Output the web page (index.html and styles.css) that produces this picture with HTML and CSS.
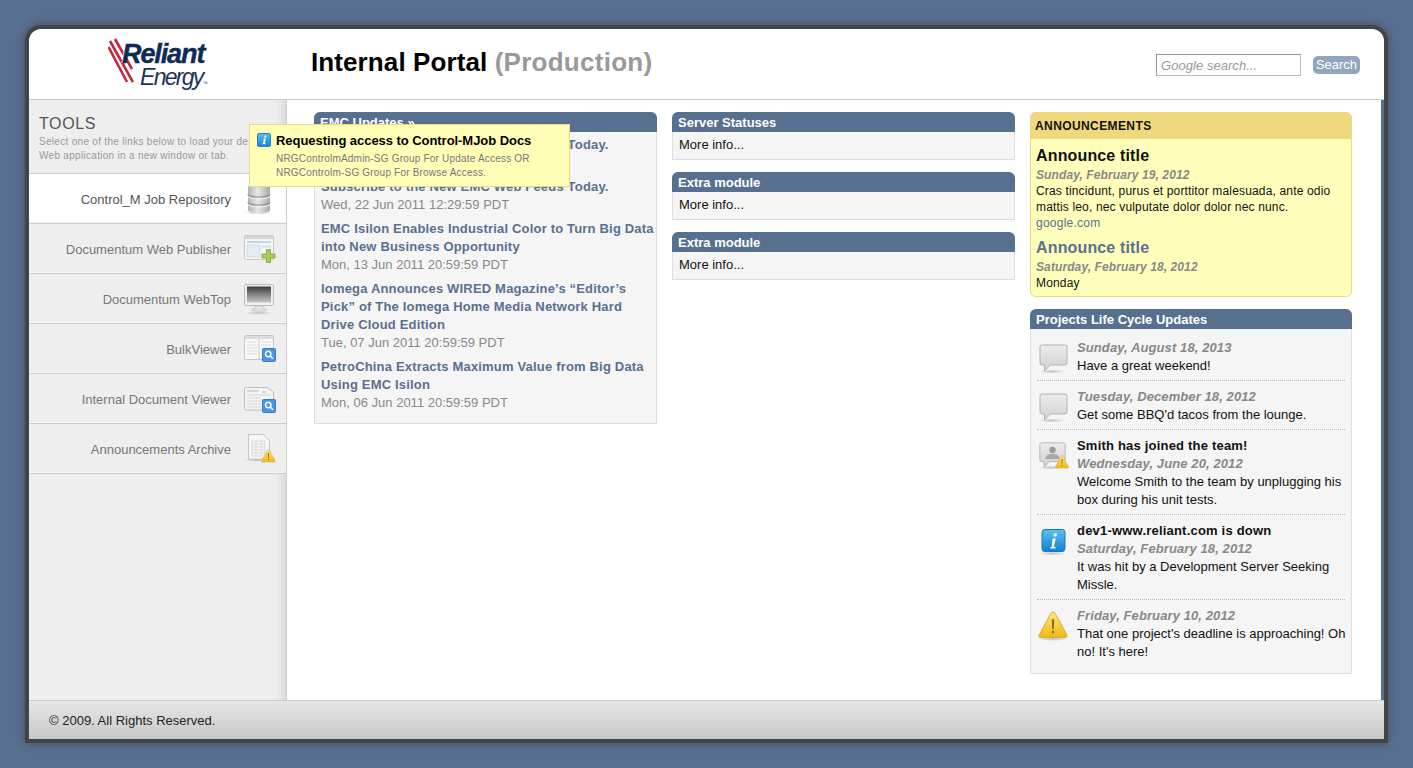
FILE: index.html
```html
<!DOCTYPE html>
<html lang="en">
<head>
<meta charset="utf-8">
<title>Internal Portal (Production)</title>
<link rel="stylesheet" href="styles.css">
</head>
<body>
<svg class="defs" aria-hidden="true">
  <defs>
    <linearGradient id="gSilver" x1="0" y1="0" x2="1" y2="0"><stop offset="0" stop-color="#b4b4b4"/><stop offset=".45" stop-color="#e8e8e8"/><stop offset="1" stop-color="#a8a8a8"/></linearGradient>
    <linearGradient id="gScreen" x1="0" y1="0" x2="0" y2="1"><stop offset="0" stop-color="#3c3c3c"/><stop offset=".55" stop-color="#8a8a8a"/><stop offset="1" stop-color="#c4c4c4"/></linearGradient>
    <linearGradient id="gBubble" x1="0" y1="0" x2="0" y2="1"><stop offset="0" stop-color="#ececec"/><stop offset="1" stop-color="#d0d0d0"/></linearGradient>
    <linearGradient id="gInfo" x1="0" y1="0" x2="0" y2="1"><stop offset="0" stop-color="#5cc0f0"/><stop offset="1" stop-color="#1480d0"/></linearGradient>
    <linearGradient id="gWarn" x1="0" y1="0" x2="0" y2="1"><stop offset="0" stop-color="#ffe680"/><stop offset="1" stop-color="#f0b818"/></linearGradient>
    <radialGradient id="gShade"><stop offset="0" stop-color="#999" stop-opacity=".6"/><stop offset="1" stop-color="#999" stop-opacity="0"/></radialGradient>
    <symbol id="i-warn" viewBox="0 0 32 30">
      <path d="M16 1.500c1 0 1.700.6 2.200 1.500l12 22c.8 1.600 0 3-1.800 3H3.600c-1.800 0-2.600-1.400-1.800-3l12-22c.5-.9 1.200-1.500 2.200-1.500z" fill="url(#gWarn)" stroke="#d8a828"/>
      <path d="M14.800 9h2.400l-.4 10h-1.600zM14.900 21h2.200v2.400h-2.200z" fill="#8a6a10"/>
    </symbol>
    <symbol id="i-mag" viewBox="0 0 14 14">
      <rect x=".5" y=".5" width="13" height="13" rx="1" fill="#4a96e6" stroke="#3a7cc8"/>
      <circle cx="6.200" cy="6" r="2.700" fill="none" stroke="#fff" stroke-width="1.400"/>
      <path d="M8.200 8l2.800 2.800" stroke="#fff" stroke-width="1.600"/>
    </symbol>
    <symbol id="i-bubble" viewBox="0 0 32 32">
      <ellipse cx="14" cy="29.500" rx="13" ry="2" fill="url(#gShade)"/>
      <path d="M4.500 3h23a2 2 0 0 1 2 2v16a2 2 0 0 1-2 2H13l-6 6v-6H4.500a2 2 0 0 1-2-2V5a2 2 0 0 1 2-2z" fill="url(#gBubble)" stroke="#b4b4b4"/>
    </symbol>
  </defs>
</svg>

<div class="frame">
  <header class="top">
    <a class="logo" href="#">
      <svg class="logo-mark" viewBox="0 0 26 46" aria-hidden="true">
        <path d="M2 3l23 41M7 1l17 30M.5 9l18.500 35" fill="none" stroke="#c4283c" stroke-width="2.600"/>
      </svg>
      <span class="logo-text"><b class="logo-a">Reliant</b><i class="logo-b">Energy<sup class="logo-tm">™</sup></i></span>
    </a>
    <h1 class="title">Internal Portal <span class="title-env">(Production)</span></h1>
    <form class="search">
      <input class="search-input" type="text" placeholder="Google search...">
      <button class="search-btn" type="button">Search</button>
    </form>
  </header>

  <div class="main">
    <aside class="side">
      <div class="side-head">
        <h2 class="side-title">TOOLS</h2>
        <p class="side-desc">Select one of the links below to load your desired<br>Web application in a new window or tab.</p>
      </div>
      <nav>
        <a class="nav-item is-active" href="#"><span>Control_M Job Repository</span>
          <svg class="nav-icon" viewBox="0 0 32 32" aria-hidden="true">
            <g transform="translate(-1 0)">
            <ellipse cx="16" cy="29.500" rx="15" ry="2" fill="url(#gShade)"/>
            <path d="M5 4c0-4 22-4 22 0v23c0 4-22 4-22 0z" fill="url(#gSilver)"/>
            <path d="M5 11c0 4 22 4 22 0M5 19c0 4 22 4 22 0" fill="none" stroke="#8e8e8e" stroke-width="1.200"/>
            <path d="M5 13c0 4 22 4 22 0M5 21c0 4 22 4 22 0" fill="none" stroke="#f4f4f4"/>
            </g>
          </svg>
        </a>
        <a class="nav-item" href="#"><span>Documentum Web Publisher</span>
          <svg class="nav-icon" viewBox="0 0 32 32" aria-hidden="true">
            <rect x=".5" y="2.500" width="29" height="24" rx="1.500" fill="#f6f6f6" stroke="#c8c8c8"/>
            <rect x="1" y="3" width="28" height="3" fill="#d8d8d8"/>
            <rect x="3" y="8" width="24" height="2" fill="#c4d6e6"/>
            <rect x="3" y="12" width="13" height="12" fill="#e2ecf4" stroke="#c4d0dc" stroke-width=".6"/>
            <rect x="18" y="12" width="9" height="3" fill="#dde6ee"/>
            <path d="M22.500 16.500h4v4.500h4.500v4h-4.500v4.500h-4v-4.500h-4.500v-4h4.500z" fill="#a8cc58" stroke="#8ab040"/>
          </svg>
        </a>
        <a class="nav-item" href="#"><span>Documentum WebTop</span>
          <svg class="nav-icon" viewBox="0 0 32 32" aria-hidden="true">
            <ellipse cx="15" cy="30" rx="14" ry="1.800" fill="url(#gShade)"/>
            <rect x=".5" y="1.500" width="29" height="21" rx="1.500" fill="#f0f0f0" stroke="#bdbdbd"/>
            <rect x="3" y="3.500" width="24" height="16" fill="url(#gScreen)"/>
            <path d="M11 23h8v3h3v2H8v-2h3z" fill="#e6e6e6" stroke="#bbb" stroke-width=".7"/>
          </svg>
        </a>
        <a class="nav-item" href="#"><span>BulkViewer</span>
          <svg class="nav-icon" viewBox="0 0 32 32" aria-hidden="true">
            <rect x=".5" y="2.500" width="29" height="24" rx="1.500" fill="#f8f8f8" stroke="#c4c4c4"/>
            <rect x="1" y="3" width="28" height="3" fill="#dcdcdc"/>
            <path d="M15 6v20" stroke="#ccc"/>
            <path d="M3 9h10M3 12h10M3 15h10M3 18h10M3 21h10M17 9h10M17 12h10" stroke="#dcdcdc"/>
            <use href="#i-mag" x="18" y="15" width="14" height="14"/>
          </svg>
        </a>
        <a class="nav-item" href="#"><span>Internal Document Viewer</span>
          <svg class="nav-icon" viewBox="0 0 32 32" aria-hidden="true">
            <path d="M2 4.500h21l6.500 5v16a1.500 1.500 0 0 1-1.500 1.500H2a1.500 1.500 0 0 1-1.500-1.500v-20a1.500 1.500 0 0 1 1.500-1z" fill="#f4f4f4" stroke="#bdbdbd"/>
            <path d="M3 8h12M18 9h4" stroke="#b8b8b8" stroke-width="1.200"/>
            <path d="M3 12h24M3 15h14M3 18h14M3 21h14M3 24h14" stroke="#d4d4d4"/>
            <use href="#i-mag" x="18" y="16" width="14" height="14"/>
          </svg>
        </a>
        <a class="nav-item" href="#"><span>Announcements Archive</span>
          <svg class="nav-icon" viewBox="0 0 32 32" aria-hidden="true">
            <ellipse cx="13" cy="27" rx="13" ry="1.800" fill="url(#gShade)"/>
            <path d="M4.500 1.500h15l6 6v18.500h-21z" fill="#f6f6f6" stroke="#c4c4c4"/>
            <path d="M8 8h13v15H8zM8 11h13M8 14h13M8 17h13M8 20h13M12 8v15M17 8v15" fill="none" stroke="#d6d6d6" stroke-width=".8"/>
            <use href="#i-warn" x="17" y="16" width="15" height="14"/>
          </svg>
        </a>
      </nav>
    </aside>

    <div class="content">
      <section class="panel">
        <h3 class="panel-head">EMC Updates »</h3>
        <div class="panel-body feed">
          <article class="feed-item"><a class="feed-title" href="#">Subscribe to the New EMC Web Feeds Today.</a><div class="feed-date">Wed, 22 Jun 2011 12:29:59 PDT</div></article>
          <article class="feed-item"><a class="feed-title" href="#">Subscribe to the New EMC Web Feeds Today.</a><div class="feed-date">Wed, 22 Jun 2011 12:29:59 PDT</div></article>
          <article class="feed-item"><a class="feed-title" href="#">EMC Isilon Enables Industrial Color to Turn Big Data into New Business Opportunity</a><div class="feed-date">Mon, 13 Jun 2011 20:59:59 PDT</div></article>
          <article class="feed-item"><a class="feed-title" href="#">Iomega Announces WIRED Magazine’s “Editor’s Pick” of The Iomega Home Media Network Hard Drive Cloud Edition</a><div class="feed-date">Tue, 07 Jun 2011 20:59:59 PDT</div></article>
          <article class="feed-item"><a class="feed-title" href="#">PetroChina Extracts Maximum Value from Big Data Using EMC Isilon</a><div class="feed-date">Mon, 06 Jun 2011 20:59:59 PDT</div></article>
        </div>
      </section>

      <div class="col">
        <section class="panel"><h3 class="panel-head">Server Statuses</h3><div class="panel-body mod"><a class="more" href="#">More info...</a></div></section>
        <section class="panel"><h3 class="panel-head">Extra module</h3><div class="panel-body mod"><a class="more" href="#">More info...</a></div></section>
        <section class="panel"><h3 class="panel-head">Extra module</h3><div class="panel-body mod"><a class="more" href="#">More info...</a></div></section>
      </div>

      <div class="col col-right">
        <section class="notice">
          <h3 class="notice-head">ANNOUNCEMENTS</h3>
          <div class="notice-body">
            <h4 class="ann-title">Announce title</h4>
            <div class="date">Sunday, February 19, 2012</div>
            <p class="txt">Cras tincidunt, purus et porttitor malesuada, ante odio mattis leo, nec vulputate dolor dolor nec nunc.</p>
            <a class="ann-link" href="#">google.com</a>
            <h4 class="ann-title is-link">Announce title</h4>
            <div class="date">Saturday, February 18, 2012</div>
            <p class="txt">Monday</p>
          </div>
        </section>

        <section class="panel">
          <h3 class="panel-head">Projects Life Cycle Updates</h3>
          <div class="panel-body updates">
            <article class="upd">
              <svg class="upd-icon" aria-hidden="true"><use href="#i-bubble"/></svg>
              <div class="upd-text"><div class="date">Sunday, August 18, 2013</div><p class="txt">Have a great weekend!</p></div>
            </article>
            <article class="upd">
              <svg class="upd-icon" aria-hidden="true"><use href="#i-bubble"/></svg>
              <div class="upd-text"><div class="date">Tuesday, December 18, 2012</div><p class="txt">Get some BBQ'd tacos from the lounge.</p></div>
            </article>
            <article class="upd">
              <svg class="upd-icon" viewBox="0 0 32 32" aria-hidden="true">
                <use href="#i-bubble" width="30" height="30"/>
                <circle cx="15" cy="10" r="3.200" fill="#9a9a9a"/>
                <path d="M8 19c0-4 3-5 7-5s7 1 7 5z" fill="#a8a8a8"/>
                <use href="#i-warn" x="17" y="15" width="15" height="14"/>
              </svg>
              <div class="upd-text"><h4 class="upd-title">Smith has joined the team!</h4><div class="date">Wednesday, June 20, 2012</div><p class="txt">Welcome Smith to the team by unplugging his box during his unit tests.</p></div>
            </article>
            <article class="upd">
              <svg class="upd-icon" viewBox="0 0 32 32" aria-hidden="true">
                <g transform="translate(0 1)">
                <ellipse cx="15" cy="27.500" rx="14" ry="2" fill="url(#gShade)"/>
                <rect x="4.500" y="3.500" width="23" height="22" rx="3" fill="url(#gInfo)" stroke="#1a78c0"/>
                <path d="M16.500 7.500h3l-.6 3h-3zM15.200 12.500h3l-1.800 8.500h1.800l-.4 1.500h-5l.4-1.500h1z" fill="#fff"/>
                </g>
              </svg>
              <div class="upd-text"><h4 class="upd-title">dev1-www.reliant.com is down</h4><div class="date">Saturday, February 18, 2012</div><p class="txt">It was hit by a Development Server Seeking Missle.</p></div>
            </article>
            <article class="upd">
              <svg class="upd-icon" viewBox="0 0 32 32" aria-hidden="true">
                <ellipse cx="15" cy="29" rx="15" ry="2" fill="url(#gShade)"/>
                <use href="#i-warn" width="31" height="30"/>
              </svg>
              <div class="upd-text"><div class="date">Friday, February 10, 2012</div><p class="txt">That one project's deadline is approaching! Oh no! It's here!</p></div>
            </article>
          </div>
        </section>
      </div>
    </div>
  </div>

  <footer class="foot">© 2009. All Rights Reserved.</footer>

  <div class="tip">
    <svg class="tip-icon" viewBox="0 0 14 14" aria-hidden="true">
      <rect x=".5" y=".5" width="13" height="13" rx="1.500" fill="url(#gInfo)" stroke="#2a80c8"/>
      <path d="M7.600 2.800h2l-.4 1.700h-2zM6.800 5.600h2L7.700 10.200h1l-.2 1H5.400l.2-1h.6z" fill="#fff"/>
    </svg>
    <div>
      <h4 class="tip-title">Requesting access to Control-MJob Docs</h4>
      <p class="tip-text">NRGControlmAdmin-SG Group For Update Access OR<br>NRGControlm-SG Group For Browse Access.</p>
    </div>
  </div>
</div>
</body>
</html>
```

FILE: styles.css
```css
* { box-sizing: border-box; }
html, body { margin: 0; height: 100%; }
body {
  background: #58708f;
  font-family: "Liberation Sans", Arial, sans-serif;
  font-size: 13px;
  color: #111;
  padding: 25px;
  overflow: hidden;
}
a { text-decoration: none; color: inherit; }
h1, h2, h3, h4, p { margin: 0; }
.defs { position: absolute; width: 0; height: 0; }

.frame {
  position: relative;
  width: 1363px;
  height: 718px;
  border: 4px solid #444;
  border-radius: 16px 16px 0 0;
  background: #fff;
  box-shadow: 0 0 8px rgba(0,0,0,.35);
  display: flex;
  flex-direction: column;
}

/* header */
.top {
  height: 71px;
  flex: none;
  border-bottom: 1px solid #ccc;
  display: flex;
  align-items: center;
  padding: 0 24px 4px 79px;
}
.logo { display: flex; width: 203px; height: 52px; align-items: flex-start; padding-top: 2px; }
.logo-mark { width: 26px; height: 46px; flex: none; margin-right: -12px; }
.logo-text { display: flex; flex-direction: column; position: relative; margin-top: 4px; }
.logo-a { font: italic bold 27px/24px "Liberation Sans", sans-serif; color: #0f2a55; letter-spacing: -1.100px; -webkit-text-stroke: .4px #0f2a55; text-shadow: -1px 0 0 #fff; }
.logo-b { font: italic 400 23px/22px "Liberation Sans", sans-serif; color: #1c3560; letter-spacing: -1.700px; padding-left: 18px; }
.logo-tm { font-size: 5px; font-style: normal; letter-spacing: 0; vertical-align: baseline; }
.title { font-size: 26px; font-weight: 700; color: #000; white-space: nowrap; letter-spacing: .1px; }
.title-env { color: #999; letter-spacing: .27px; }
.search { margin-left: auto; display: flex; align-items: center; gap: 12px; margin-top: 5px; }
.search-input {
  width: 145px; height: 22px;
  border: 1px solid #bbb; border-top-color: #999; border-left-color: #999;
  padding: 2px 4px 0; font: italic 13px "Liberation Sans", sans-serif; letter-spacing: .05px; color: #999; background: #fff;
}
.search-input::placeholder { color: #999; opacity: 1; }
.search-btn {
  width: 47px; height: 18px; padding: 0;
  border: 0; border-radius: 5px;
  background: #94a6bd; color: #fff;
  font: 13px "Liberation Sans", sans-serif;
}

/* main */
.main { flex: 1; display: flex; min-height: 0; border-right: 3px solid #58708f; }
.side {
  width: 258px; flex: none;
  background: linear-gradient(90deg, #eee 0, #eee 246px, #dcdcdc 100%);
  border-right: 1px solid #ccc;
}
.side-head { height: 74px; padding: 15px 10px 0; border-bottom: 1px solid #ccc; }
.side-title { font-size: 16px; font-weight: 400; line-height: 18px; color: #555; letter-spacing: .6px; }
.side-desc { font-size: 10px; line-height: 14px; color: #999; letter-spacing: .3px; white-space: nowrap; overflow: hidden; margin-top: 2px; }
.nav-item {
  height: 50px;
  display: flex; align-items: center; justify-content: flex-end; gap: 13px;
  padding: 1px 10px 0 0;
  border-bottom: 1px solid #ccc;
  box-shadow: inset 0 -1px 0 #f6f6f6;
  background: #eee;
  color: #777;
}
.nav-item.is-active { background: #fff; color: #555; }
.nav-icon { width: 32px; height: 32px; flex: none; }

/* content columns */
.content {
  flex: 1;
  padding: 12px 30px 0 27px;
  display: grid;
  grid-template-columns: 343px 343px 322px;
  column-gap: 15px;
  align-items: start;
}
.col { display: flex; flex-direction: column; gap: 12px; }
.panel { border: 1px solid #ddd; border-radius: 6px 6px 0 0; background: #f5f5f5; }
.panel-head {
  margin: -1px -1px 0;
  height: 20px;
  background: #58708f;
  color: #fff;
  font-size: 13px;
  line-height: 21px;
  padding-left: 6px;
  border-radius: 6px 6px 0 0;
}
.mod { padding: 4px 6px 5px; line-height: 18px; }
.feed { padding: 4px 2px 11px 6px; }
.feed-item + .feed-item { margin-top: 6px; }
.feed-title { display: block; font-weight: 700; color: #5a7090; line-height: 18px; letter-spacing: .18px; }
.feed-date { color: #888; line-height: 18px; }

/* notices */
.notice { border: 1px solid #eed97e; border-radius: 6px; background: #ffffbb; }
.notice-head {
  margin: -1px -1px 0; height: 27px;
  background: #eed97e; border-radius: 6px 6px 0 0;
  font-size: 12px; line-height: 29px; padding-left: 5px; color: #111; letter-spacing: .4px;
}
.notice-body { padding: 6px 5px 5px; }
.ann-title { font-size: 16px; line-height: 21px; color: #111; letter-spacing: .15px; margin-bottom: 1px; }
.ann-title.is-link { color: #5a7090; margin-top: 6px; }
.date { font-style: italic; font-weight: 700; color: #888; line-height: 18px; letter-spacing: .1px; }
.notice .date { line-height: 16px; font-size: 12px; }
.txt { line-height: 18px; color: #111; }
.notice .txt { line-height: 16px; font-size: 12px; letter-spacing: .16px; }
.ann-link { display: block; line-height: 16px; font-size: 12px; color: #5a7090; letter-spacing: .25px; }

/* updates */
.updates { padding: 10px 6px 12px; }
.upd { display: flex; gap: 7px; border-bottom: 1px dotted #bbb; padding-bottom: 5px; margin-bottom: 7px; }
.upd:last-child { border-bottom: 0; margin-bottom: 0; padding-bottom: 0; }
.upd-icon { width: 33px; height: 32px; flex: none; overflow: visible; margin-top: 3px; }
.upd-text { flex: 1; min-width: 0; margin-right: -3px; }
.upd-title { font-size: 13px; line-height: 18px; color: #111; letter-spacing: .2px; }

/* footer */
.foot {
  height: 39px; flex: none;
  border-top: 1px solid #ccc;
  background: linear-gradient(#e6e6e6, #c8c8c8);
  padding-left: 20px;
  line-height: 40px;
  color: #222;
}

/* tooltip */
.tip {
  position: absolute;
  left: 220px; top: 95px;
  width: 321px; height: 63px;
  background: #ffffb8;
  border: 1px solid #eed97e;
  display: flex; gap: 5px;
  padding: 8px 7px;
}
.tip-icon { width: 14px; height: 14px; flex: none; }
.tip-title { font-size: 13px; font-weight: 700; line-height: 15px; color: #000; white-space: nowrap; letter-spacing: -.05px; }
.tip-text { font-size: 10px; line-height: 14px; color: #777; margin-top: 4px; letter-spacing: .2px; white-space: nowrap; }
```
